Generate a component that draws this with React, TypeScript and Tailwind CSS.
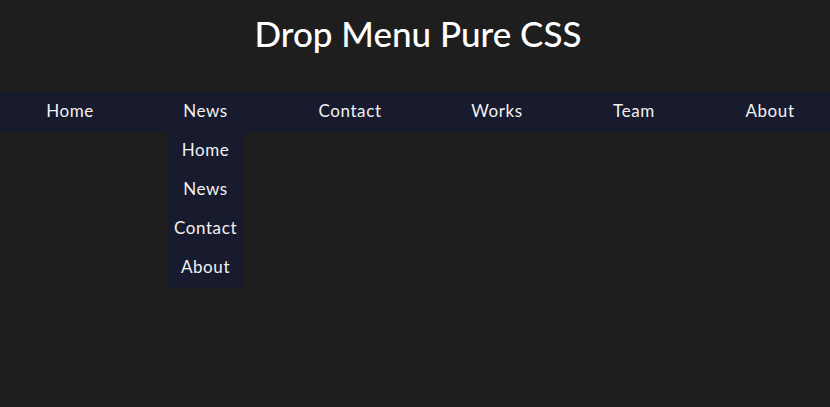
const items = [
  { name: "Home", w: "w-[80px]", ml: "ml-[30px]" },
  { name: "News", w: "w-[77px]", ml: "ml-[57px]", sub: ["Home", "News", "Contact", "About"] },
  { name: "Contact", w: "w-[96px]", ml: "ml-[58px]" },
  { name: "Works", w: "w-[84px]", ml: "ml-[57px]" },
  { name: "Team", w: "w-[76px]", ml: "ml-[57px]" },
  { name: "About", w: "w-[80px]", ml: "ml-[58px]" },
];

export default function App() {
  return (
    <div className="min-h-[407px] bg-[#1e1e1e] text-[#f2f2f2] font-['Lato','Liberation_Sans',sans-serif]">
      <h1 className="pt-[7px] pl-[6px] h-[92px] text-center text-[35px] font-medium text-white">Drop Menu Pure CSS</h1>

      {/* nav */}
      <ul className="flex h-10 bg-[#181a2d]">
        {items.map((item) => (
          <li key={item.name} className={`relative ${item.w} ${item.ml} flex items-center justify-center pb-[2px] text-[17px] tracking-[0.6px]`}>
            {item.name}
            {item.sub && (
              <ul className="absolute top-10 left-0 w-full bg-[#181a2d]">
                {item.sub.map((s) => (
                  <li key={s} className="h-[39px] flex items-center justify-center pb-[3px] text-[17px] tracking-[0.6px]">
                    {s}
                  </li>
                ))}
              </ul>
            )}
          </li>
        ))}
      </ul>
    </div>
  );
}
